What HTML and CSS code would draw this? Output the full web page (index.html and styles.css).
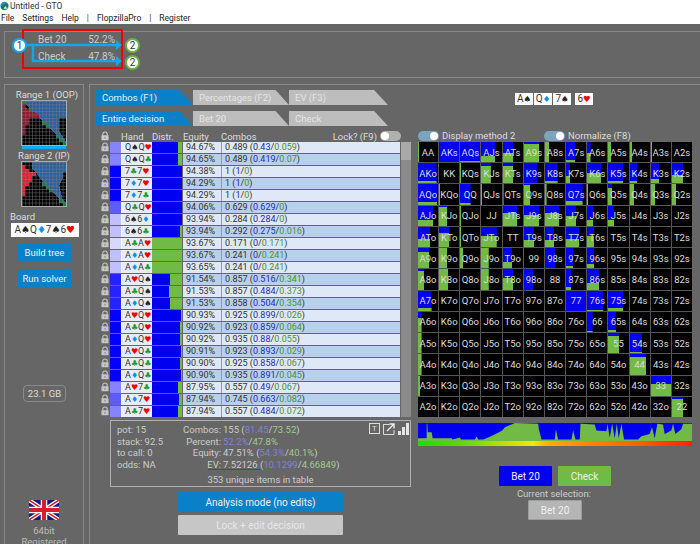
FILE: index.html
```html
<!DOCTYPE html>
<html lang="en">
<head>
<meta charset="utf-8">
<title>Untitled - GTO</title>
<link rel="stylesheet" href="styles.css">
</head>
<body>
<svg class="defs" width="0" height="0" aria-hidden="true">
  <symbol id="lock" viewBox="0 0 9 10"><path d="M2 4.5V3a2.5 2.5 0 0 1 5 0v1.5" fill="none" stroke="currentColor" stroke-width="1.3"/><rect x="0.5" y="4.2" width="8" height="5.6" rx="0.6" fill="currentColor"/><rect x="4" y="6" width="1" height="2" fill="#777"/></symbol>
</svg>
<header class="titlebar">
  <svg class="appicon" viewBox="0 0 10 10"><circle cx="5" cy="5" r="4.6" fill="#1f8fd0"/><path d="M1 6c2-3 3-1 4-3s3-1 4 1c0 3-2 5-4 5S1 8 1 6z" fill="#1f7a4a"/><path d="M4 8l2-3 2 3z" fill="#e8f0e8"/></svg>
  <span>Untitled - GTO</span>
</header>
<nav class="menu"><span>File</span><span>Settings</span><span>Help</span><span class="sep">|</span><span>FlopzillaPro</span><span class="sep">|</span><span>Register</span></nav>
<div class="app">
  <section class="tree">
    <div class="redbox"></div>
    <svg class="tree-lines" viewBox="0 0 150 47">
      <path d="M22 14H114M29 14V30H114" fill="none" stroke="#10a8ea" stroke-width="2.5"/>
      <path d="M112 9l6 5-6 5zM112 25l6 5-6 5z" fill="#10a8ea"/>
    </svg>
    <span class="node n1">1</span><span class="node n2a">2</span><span class="node n2b">2</span>
    <div class="act a1"><span>Bet 20</span><span>52.2%</span></div>
    <div class="act a2"><span>Check</span><span>47.8%</span></div>
  </section>
  <div class="work">
    <aside class="side">
      <div class="rlabel">Range 1 (OOP)</div>
      <svg class="mini" viewBox="0 0 13 13" shape-rendering="crispEdges">
        <defs><pattern id="g1" width="1" height="1" patternUnits="userSpaceOnUse"><path d="M0 0H1M0 0V1" fill="none" stroke="#808080" stroke-width="0.5"/></pattern></defs>
        <rect width="13" height="13" fill="#000"/>
        <path d="M1 0H13V5H11V9L13 12H12L1 1z" fill="#2a5f9e"/>
        <path d="M0 1H1V2L3 3L5 4V5H2V7H1V10H0z" fill="#8c1a2c"/>
        <path d="M0 0h1v1H0zM2 2h1v1H2zM6 6h1v1H6zM7 7h1v1H7zM10 10h1v1h-1zM11 11h1v1h-1zM12 12h1v1h-1z" fill="#1c7d3a"/>
        <rect width="13" height="13" fill="url(#g1)"/>
      </svg>
      <div class="rbar"></div>
      <div class="rlabel second">Range 2 (IP)</div>
      <svg class="mini" viewBox="0 0 13 13" shape-rendering="crispEdges">
        <defs><pattern id="g2" width="1" height="1" patternUnits="userSpaceOnUse"><path d="M0 0H1M0 0V1" fill="none" stroke="#808080" stroke-width="0.5"/></pattern></defs>
        <rect width="13" height="13" fill="#000"/>
        <path d="M3 0H13V3H12V5L11 7L12 11L13 12H12L7 7L4 3L3 2z" fill="#2a5f9e"/>
        <path d="M0 1H1V2H2V3H4V4H3V6H2V7H1V10H0z" fill="#e0202e"/>
        <path d="M6 6h1v1H6zM7 7h1v1H7zM8 8h1v1H8zM11 11h1v1h-1zM12 12h1v1h-1z" fill="#1c7d3a"/>
        <rect width="13" height="13" fill="url(#g2)"/>
      </svg>
      <div class="boardlabel">Board</div>
      <div class="boardbox">A<i class="sp">♠</i>Q<i class="di">♦</i>7<i class="sp">♠</i>6<i class="he">♥</i></div>
      <button class="btn sidebtn">Build tree</button>
      <button class="btn sidebtn">Run solver</button>
      <div class="mem">23.1 GB</div>
      <svg class="flag" viewBox="0 0 60 40">
        <rect width="60" height="40" fill="#1a1a7a"/>
        <path d="M0 0L60 40M60 0L0 40" stroke="#fff" stroke-width="8"/>
        <path d="M0 0L60 40M60 0L0 40" stroke="#d81e2c" stroke-width="3"/>
        <path d="M30 0V40M0 20H60" stroke="#fff" stroke-width="13"/>
        <path d="M30 0V40M0 20H60" stroke="#d81e2c" stroke-width="8"/>
      </svg>
      <div class="foot">64bit</div>
      <div class="foot">Registered</div>
    </aside>
    <main class="mainpanel">
      <div class="center">
        <div class="tabs"><span class="tab on">Combos (F1)</span><span class="tab">Percentages (F2)</span><span class="tab">EV (F3)</span></div>
        <div class="tabs"><span class="tab on">Entire decision</span><span class="tab">Bet 20</span><span class="tab">Check</span></div>
        <div class="thead">
          <svg class="lock"><use href="#lock"/></svg><span class="th-hand">Hand</span><span class="th-dist">Distr.</span><span class="th-eq">Equity</span><span class="th-cmb">Combos</span>
          <span class="th-lock">Lock? (F9)</span><span class="toggle grey"></span>
        </div>
        <div class="tablewrap">
          <div class="table">
            <div class="row"><svg class="lock"><use href="#lock"/></svg><span class="sw s4"></span><span class="hand">Q<i class="sp">♠</i>Q<i class="he">♥</i></span><span class="dist" style="--b:85%"></span><span class="eq">94.67%</span><span class="cmb">0.489 (<b>0.43</b>/<u>0.059</u>)</span></div>
            <div class="row"><svg class="lock"><use href="#lock"/></svg><span class="sw s4"></span><span class="hand">Q<i class="sp">♠</i>Q<i class="cl">♣</i></span><span class="dist" style="--b:85%"></span><span class="eq">94.65%</span><span class="cmb">0.489 (<b>0.419</b>/<u>0.07</u>)</span></div>
            <div class="row"><svg class="lock"><use href="#lock"/></svg><span class="sw s1"></span><span class="hand">7<i class="cl">♣</i>7<i class="he">♥</i></span><span class="dist" style="--b:100%"></span><span class="eq">94.38%</span><span class="cmb">1 (<b>1</b>/<u>0</u>)</span></div>
            <div class="row"><svg class="lock"><use href="#lock"/></svg><span class="sw s1"></span><span class="hand">7<i class="di">♦</i>7<i class="he">♥</i></span><span class="dist" style="--b:100%"></span><span class="eq">94.29%</span><span class="cmb">1 (<b>1</b>/<u>0</u>)</span></div>
            <div class="row"><svg class="lock"><use href="#lock"/></svg><span class="sw s1"></span><span class="hand">7<i class="di">♦</i>7<i class="cl">♣</i></span><span class="dist" style="--b:100%"></span><span class="eq">94.29%</span><span class="cmb">1 (<b>1</b>/<u>0</u>)</span></div>
            <div class="row"><svg class="lock"><use href="#lock"/></svg><span class="sw s3"></span><span class="hand">Q<i class="cl">♣</i>Q<i class="he">♥</i></span><span class="dist" style="--b:100%"></span><span class="eq">94.06%</span><span class="cmb">0.629 (<b>0.629</b>/<u>0</u>)</span></div>
            <div class="row"><svg class="lock"><use href="#lock"/></svg><span class="sw s5"></span><span class="hand">6<i class="sp">♠</i>6<i class="di">♦</i></span><span class="dist" style="--b:100%"></span><span class="eq">93.94%</span><span class="cmb">0.284 (<b>0.284</b>/<u>0</u>)</span></div>
            <div class="row"><svg class="lock"><use href="#lock"/></svg><span class="sw s5"></span><span class="hand">6<i class="sp">♠</i>6<i class="cl">♣</i></span><span class="dist" style="--b:94%"></span><span class="eq">93.94%</span><span class="cmb">0.292 (<b>0.275</b>/<u>0.016</u>)</span></div>
            <div class="row"><svg class="lock"><use href="#lock"/></svg><span class="sw s6"></span><span class="hand">A<i class="cl">♣</i>A<i class="he">♥</i></span><span class="dist" style="--b:0%"></span><span class="eq">93.67%</span><span class="cmb">0.171 (<b>0</b>/<u>0.171</u>)</span></div>
            <div class="row"><svg class="lock"><use href="#lock"/></svg><span class="sw s5"></span><span class="hand">A<i class="di">♦</i>A<i class="he">♥</i></span><span class="dist" style="--b:0%"></span><span class="eq">93.67%</span><span class="cmb">0.241 (<b>0</b>/<u>0.241</u>)</span></div>
            <div class="row"><svg class="lock"><use href="#lock"/></svg><span class="sw s5"></span><span class="hand">A<i class="di">♦</i>A<i class="cl">♣</i></span><span class="dist" style="--b:0%"></span><span class="eq">93.65%</span><span class="cmb">0.241 (<b>0</b>/<u>0.241</u>)</span></div>
            <div class="row"><svg class="lock"><use href="#lock"/></svg><span class="sw s2"></span><span class="hand">A<i class="he">♥</i>Q<i class="sp">♠</i></span><span class="dist" style="--b:60%"></span><span class="eq">91.54%</span><span class="cmb">0.857 (<b>0.516</b>/<u>0.341</u>)</span></div>
            <div class="row"><svg class="lock"><use href="#lock"/></svg><span class="sw s2"></span><span class="hand">A<i class="cl">♣</i>Q<i class="sp">♠</i></span><span class="dist" style="--b:55%"></span><span class="eq">91.53%</span><span class="cmb">0.857 (<b>0.484</b>/<u>0.373</u>)</span></div>
            <div class="row"><svg class="lock"><use href="#lock"/></svg><span class="sw s2"></span><span class="hand">A<i class="di">♦</i>Q<i class="sp">♠</i></span><span class="dist" style="--b:59%"></span><span class="eq">91.53%</span><span class="cmb">0.858 (<b>0.504</b>/<u>0.354</u>)</span></div>
            <div class="row"><svg class="lock"><use href="#lock"/></svg><span class="sw s1"></span><span class="hand">A<i class="he">♥</i>Q<i class="he">♥</i></span><span class="dist" style="--b:97%"></span><span class="eq">90.93%</span><span class="cmb">0.925 (<b>0.899</b>/<u>0.026</u>)</span></div>
            <div class="row"><svg class="lock"><use href="#lock"/></svg><span class="sw s1"></span><span class="hand">A<i class="cl">♣</i>Q<i class="he">♥</i></span><span class="dist" style="--b:93%"></span><span class="eq">90.92%</span><span class="cmb">0.923 (<b>0.859</b>/<u>0.064</u>)</span></div>
            <div class="row"><svg class="lock"><use href="#lock"/></svg><span class="sw s1"></span><span class="hand">A<i class="di">♦</i>Q<i class="he">♥</i></span><span class="dist" style="--b:94%"></span><span class="eq">90.92%</span><span class="cmb">0.935 (<b>0.88</b>/<u>0.055</u>)</span></div>
            <div class="row"><svg class="lock"><use href="#lock"/></svg><span class="sw s1"></span><span class="hand">A<i class="he">♥</i>Q<i class="cl">♣</i></span><span class="dist" style="--b:97%"></span><span class="eq">90.91%</span><span class="cmb">0.923 (<b>0.893</b>/<u>0.029</u>)</span></div>
            <div class="row"><svg class="lock"><use href="#lock"/></svg><span class="sw s1"></span><span class="hand">A<i class="cl">♣</i>Q<i class="cl">♣</i></span><span class="dist" style="--b:93%"></span><span class="eq">90.90%</span><span class="cmb">0.925 (<b>0.858</b>/<u>0.067</u>)</span></div>
            <div class="row"><svg class="lock"><use href="#lock"/></svg><span class="sw s1"></span><span class="hand">A<i class="di">♦</i>Q<i class="cl">♣</i></span><span class="dist" style="--b:95%"></span><span class="eq">90.90%</span><span class="cmb">0.935 (<b>0.891</b>/<u>0.045</u>)</span></div>
            <div class="row"><svg class="lock"><use href="#lock"/></svg><span class="sw s4"></span><span class="hand">A<i class="he">♥</i>7<i class="cl">♣</i></span><span class="dist" style="--b:88%"></span><span class="eq">87.95%</span><span class="cmb">0.557 (<b>0.49</b>/<u>0.067</u>)</span></div>
            <div class="row"><svg class="lock"><use href="#lock"/></svg><span class="sw s3"></span><span class="hand">A<i class="di">♦</i>7<i class="he">♥</i></span><span class="dist" style="--b:89%"></span><span class="eq">87.94%</span><span class="cmb">0.745 (<b>0.663</b>/<u>0.082</u>)</span></div>
            <div class="row"><svg class="lock"><use href="#lock"/></svg><span class="sw s4"></span><span class="hand">A<i class="cl">♣</i>7<i class="he">♥</i></span><span class="dist" style="--b:87%"></span><span class="eq">87.94%</span><span class="cmb">0.557 (<b>0.484</b>/<u>0.072</u>)</span></div>
          </div>
          <div class="scroll"><div class="thumb"></div></div>
        </div>
        <section class="stats">
          <div class="stat-icons">
            <span class="ic-t">T</span>
            <svg class="ic-e" viewBox="0 0 12 12"><path d="M.5 1.500h6M.5 1V11.500H11V7" fill="none" stroke="#ddd"/><path d="M4 8L10.500 1.500M6.500 1H11V5.500" fill="none" stroke="#eee" stroke-width="1.4"/></svg>
            <svg class="ic-s" viewBox="0 0 11 12"><path d="M0 8h3v4H0zM4 4h3v8H4zM8 0h3v12H8z" fill="#e4e4e4"/></svg>
          </div>
          <div class="stat-grid">
            <span>pot: 15</span><span class="lbl">Combos:</span><span>155 (<b>81.45</b>/<u>73.52</u>)</span>
            <span>stack: 92.5</span><span class="lbl">Percent:</span><span><b>52.2%</b>/<u>47.8%</u></span>
            <span>to call: 0</span><span class="lbl">Equity:</span><span>47.51% (<b>54.3%</b>/<u>40.1%</u>)</span>
            <span>odds: NA</span><span class="lbl">EV:</span><span>7.52126 (<b>10.1299</b>/<u>4.66849</u>)</span>
          </div>
          <div class="evline"></div>
          <div class="unique">353 unique items in table</div>
        </section>
        <div class="modes">
          <button class="btn mode">Analysis mode (no edits)</button>
          <button class="btn mode off">Lock + edit decision</button>
        </div>
      </div>
      <div class="right">
        <div class="cards"><span class="card">A<i class="sp">♠</i></span><span class="card">Q<i class="di">♦</i></span><span class="card">7<i class="sp">♠</i></span><span class="card gap">6<i class="he">♥</i></span></div>
        <div class="toggles">
          <div class="tg one"><span class="toggle"></span><span>Display method 2</span></div>
          <div class="tg"><span class="toggle"></span><span>Normalize (F8)</span></div>
        </div>
        <div class="heat">
          <div class="c" style="--w:7%;--b:0%">AA</div><div class="c" style="--w:100%;--b:100%">AKs</div><div class="c" style="--w:100%;--b:95%">AQs</div><div class="c" style="--w:67%;--b:70%">AJs</div><div class="c" style="--w:50%;--b:57%">ATs</div><div class="c" style="--w:75%;--b:12%">A9s</div><div class="c" style="--w:20%;--b:0%">A8s</div><div class="c" style="--w:45%;--b:88%">A7s</div><div class="c" style="--w:18%;--b:55%">A6s</div><div class="c" style="--w:15%;--b:0%">A5s</div><div class="c" style="--w:12%;--b:0%">A4s</div><div class="c" style="--w:7%;--b:0%">A3s</div><div class="c">A2s</div>
          <div class="c" style="--w:93%;--b:92%">AKo</div><div class="c">KK</div><div class="c" style="--w:6%;--b:0%">KQs</div><div class="c" style="--w:47%;--b:16%">KJs</div><div class="c" style="--w:50%;--b:15%">KTs</div><div class="c" style="--w:65%;--b:100%">K9s</div><div class="c" style="--w:63%;--b:90%">K8s</div><div class="c" style="--w:20%;--b:65%">K7s</div><div class="c" style="--w:70%;--b:50%">K6s</div><div class="c" style="--w:72%;--b:92%">K5s</div><div class="c" style="--w:36%;--b:90%">K4s</div><div class="c" style="--w:42%;--b:80%">K3s</div><div class="c" style="--w:57%;--b:60%">K2s</div>
          <div class="c" style="--w:97%;--b:85%">AQo</div><div class="c" style="--w:6%;--b:0%">KQo</div><div class="c" style="--w:53%;--b:90%">QQ</div><div class="c" style="--w:6%;--b:0%">QJs</div><div class="c" style="--w:3%;--b:0%">QTs</div><div class="c" style="--w:32%;--b:5%">Q9s</div><div class="c" style="--w:8%;--b:0%">Q8s</div><div class="c" style="--w:83%;--b:80%">Q7s</div><div class="c" style="--w:5%;--b:0%">Q6s</div><div class="c" style="--w:20%;--b:20%">Q5s</div><div class="c" style="--w:22%;--b:0%">Q4s</div><div class="c" style="--w:22%;--b:0%">Q3s</div><div class="c" style="--w:22%;--b:0%">Q2s</div>
          <div class="c" style="--w:77%;--b:72%">AJo</div><div class="c" style="--w:42%;--b:5%">KJo</div><div class="c" style="--w:6%;--b:0%">QJo</div><div class="c">JJ</div><div class="c" style="--w:72%;--b:35%">JTs</div><div class="c" style="--w:77%;--b:45%">J9s</div><div class="c" style="--w:70%;--b:35%">J8s</div><div class="c" style="--w:50%;--b:50%">J7s</div><div class="c" style="--w:30%;--b:70%">J6s</div><div class="c" style="--w:30%;--b:70%">J5s</div><div class="c">J4s</div><div class="c">J3s</div><div class="c">J2s</div>
          <div class="c" style="--w:60%;--b:60%">ATo</div><div class="c" style="--w:50%;--b:30%">KTo</div><div class="c" style="--w:5%;--b:0%">QTo</div><div class="c" style="--w:75%;--b:45%">JTo</div><div class="c">TT</div><div class="c" style="--w:52%;--b:65%">T9s</div><div class="c" style="--w:47%;--b:65%">T8s</div><div class="c" style="--w:65%;--b:60%">T7s</div><div class="c" style="--w:37%;--b:45%">T6s</div><div class="c">T5s</div><div class="c">T4s</div><div class="c">T3s</div><div class="c">T2s</div>
          <div class="c" style="--w:57%;--b:20%">A9o</div><div class="c" style="--w:42%;--b:0%">K9o</div><div class="c" style="--w:17%;--b:0%">Q9o</div><div class="c" style="--w:37%;--b:0%">J9o</div><div class="c" style="--w:45%;--b:70%">T9o</div><div class="c">99</div><div class="c" style="--w:50%;--b:100%">98s</div><div class="c" style="--w:35%;--b:90%">97s</div><div class="c" style="--w:37%;--b:80%">96s</div><div class="c">95s</div><div class="c">94s</div><div class="c">93s</div><div class="c">92s</div>
          <div class="c" style="--w:32%;--b:10%">A8o</div><div class="c" style="--w:47%;--b:0%">K8o</div><div class="c">Q8o</div><div class="c" style="--w:37%;--b:0%">J8o</div><div class="c" style="--w:50%;--b:45%">T8o</div><div class="c" style="--w:47%;--b:100%">98o</div><div class="c">88</div><div class="c" style="--w:25%;--b:85%">87s</div><div class="c" style="--w:62%;--b:65%">86s</div><div class="c">85s</div><div class="c">84s</div><div class="c">83s</div><div class="c">82s</div>
          <div class="c" style="--w:68%;--b:85%">A7o</div><div class="c">K7o</div><div class="c">Q7o</div><div class="c">J7o</div><div class="c">T7o</div><div class="c">97o</div><div class="c">87o</div><div class="c" style="--w:100%;--b:100%">77</div><div class="c" style="--w:82%;--b:97%">76s</div><div class="c" style="--w:73%;--b:85%">75s</div><div class="c">74s</div><div class="c">73s</div><div class="c">72s</div>
          <div class="c" style="--w:18%;--b:30%">A6o</div><div class="c">K6o</div><div class="c">Q6o</div><div class="c">J6o</div><div class="c">T6o</div><div class="c">96o</div><div class="c">86o</div><div class="c">76o</div><div class="c" style="--w:28%;--b:95%">66</div><div class="c" style="--w:38%;--b:90%">65s</div><div class="c">64s</div><div class="c">63s</div><div class="c">62s</div>
          <div class="c" style="--w:18%;--b:0%">A5o</div><div class="c">K5o</div><div class="c">Q5o</div><div class="c">J5o</div><div class="c">T5o</div><div class="c">95o</div><div class="c">85o</div><div class="c">75o</div><div class="c">65o</div><div class="c" style="--w:53%;--b:15%">55</div><div class="c" style="--w:60%;--b:95%">54s</div><div class="c">53s</div><div class="c">52s</div>
          <div class="c" style="--w:18%;--b:0%">A4o</div><div class="c">K4o</div><div class="c">Q4o</div><div class="c">J4o</div><div class="c">T4o</div><div class="c">94o</div><div class="c">84o</div><div class="c">74o</div><div class="c">64o</div><div class="c">54o</div><div class="c" style="--w:82%;--b:12%">44</div><div class="c">43s</div><div class="c">42s</div>
          <div class="c" style="--w:10%;--b:0%">A3o</div><div class="c">K3o</div><div class="c">Q3o</div><div class="c">J3o</div><div class="c">T3o</div><div class="c">93o</div><div class="c">83o</div><div class="c">73o</div><div class="c">63o</div><div class="c">53o</div><div class="c">43o</div><div class="c" style="--w:100%;--b:40%">33</div><div class="c">32s</div>
          <div class="c">A2o</div><div class="c">K2o</div><div class="c">Q2o</div><div class="c">J2o</div><div class="c">T2o</div><div class="c">92o</div><div class="c">82o</div><div class="c">72o</div><div class="c">62o</div><div class="c">52o</div><div class="c">42o</div><div class="c">32o</div><div class="c" style="--w:55%;--b:8%">22</div>
        </div>
        <svg class="chart" viewBox="9 278 823 52" preserveAspectRatio="none">
          <rect x="9" y="278" width="823" height="52" fill="#0000f0"/>
          <path fill="#70ba45" d="M9 330V322H35V280H37L38 305H50L53 322H110L113 326L135 320L138 326H180L185 316L190 326H205L225 318L245 308L262 300L270 290L290 282L300 278L370 280L372 296L380 326H420L423 296L430 326H470L475 300L482 326H495L497 280L540 282L545 300L575 302L578 280L585 320L592 280L600 322L606 280L612 322L620 280L628 326H640L670 326L680 316L705 310L712 290L720 322L728 280L745 282L750 310L770 300L775 280L782 310L800 296L805 280H832V330z"/>
        </svg>
        <div class="ramp"></div>
        <div class="actions"><button class="btn act-b">Bet 20</button><button class="btn act-c">Check</button></div>
        <div class="cursel">Current selection:</div>
        <button class="btn selbtn">Bet 20</button>
      </div>
    </main>
  </div>
</div>
</body>
</html>
```
FILE: styles.css
```css
* { box-sizing: border-box; }
html, body { margin: 0; height: 544px; overflow: hidden; }
body { font-family: Roboto, "Open Sans", sans-serif; font-size: 9.5px; color: #ddd; background: #666; }
.defs { position: absolute; }
i { font-style: normal; font-family: "DejaVu Sans", sans-serif; }
.sp { color: #222; } .cl { color: #1f9a2f; } .di { color: #0a92e6; } .he { color: #f00000; }

.titlebar { height: 12px; background: #fff; color: #333; display: flex; align-items: center; gap: 1px; font-size: 8.5px; line-height: 12px; }
.appicon { width: 9px; height: 10px; }
.menu { height: 12px; background: #fff; color: #222; display: flex; font-size: 8.5px; line-height: 12px; padding-left: 1px; gap: 8px; }
.menu .sep { color: #444; }

.app { padding: 7px 0 0 4px; height: 520px; }
.tree { position: relative; height: 47px; margin-right: -2px; border: 1px solid #888; }
.tree-lines { position: absolute; left: -1px; top: -1px; width: 150px; height: 47px; }
.redbox { position: absolute; left: 17px; top: -3px; width: 101px; height: 40px; border: 2px solid #f00000; }
.node { position: absolute; width: 15px; height: 15px; border-radius: 50%; background: #fff; color: #333; text-align: center; line-height: 11px; font-size: 10px; border: 2px solid; }
.n1 { left: 7px; top: 6px; border-color: #10a8ea; }
.n2a { left: 120px; top: 6px; border-color: #6cb33f; }
.n2b { left: 120px; top: 23px; border-color: #6cb33f; }
.act { position: absolute; left: 33px; width: 77px; display: flex; justify-content: space-between; font-size: 10px; line-height: 12px; color: #ccc; }
.a1 { top: 2px; } .a2 { top: 19px; }

.work { display: flex; gap: 5px; margin-top: 6px; height: 470px; }
.side { width: 80px; border: 1px solid #888; border-width: 1px 1px 0; display: flex; flex-direction: column; align-items: center; padding-top: 4px; }
.rlabel { font-size: 9.5px; line-height: 12px; margin-left: 6px; white-space: nowrap; color: #ddd; }
.rlabel.second { margin: 1px 0 0; }
.mini { width: 44px; height: 44px; display: block; outline: 1px solid #aaa; }
.rbar { width: 44px; height: 3px; background: #08b0f4; margin-top: 1px; }
.boardlabel { align-self: flex-start; margin: 5px 0 0 5px; font-size: 9.5px; line-height: 12px; }
.boardbox { width: 68px; height: 14px; background: #fff; color: #333; font-size: 10px; line-height: 14px; padding-left: 4px; margin-left: 1px; white-space: nowrap; }
.btn { border: 0; border-radius: 1px; font-family: inherit; color: #f0f0f0; padding: 0; display: block; }
.sidebtn { width: 53px; height: 19px; background: #0a80c8; font-size: 9.5px; margin-top: 6px; margin-left: 1px; }
.sidebtn + .sidebtn { margin-top: 7px; }
.mem { margin-top: 97px; width: 43px; height: 17px; border: 1px solid #8a8a8a; border-radius: 4px; text-align: center; line-height: 15px; font-size: 9.5px; color: #ddd; margin-left: 1px; flex: none; }
.flag { width: 30px; height: 20px; margin-top: 98px; display: block; flex: none; }
.foot { font-size: 9.5px; line-height: 11px; margin-top: 5px; color: #bbb; flex: none; }
.foot + .foot { margin-top: 0; }

.mainpanel { flex: 1; border: 1px solid #888; border-width: 1px 0 0 1px; display: flex; padding: 5px 0 0 6px; margin-right: -2px; }
.center { width: 316px; flex: none; }
.tabs { display: grid; grid-template-columns: 97px 96px 99px; height: 15px; margin-bottom: 6px; width: 292px; }
.tab { background: #bdbdbd; color: #e4e4e4; font-size: 9.5px; line-height: 15px; padding-left: 6px; clip-path: polygon(0 0, 86% 0, 100% 100%, 0 100%); }
.tab.on { background: #0a80c8; color: #e8f0f5; }
.thead { height: 11px; width: 305px; margin: -1px 0 0; padding-left: 5px; font-size: 9.5px; line-height: 11px; display: flex; color: #ddd; }
.thead .lock { width: 8px; height: 10px; flex: none; color: #ccc; margin-right: 12px; }
.th-hand { width: 31px; } .th-dist { width: 31px; } .th-eq { width: 38px; }
.th-lock { margin-left: auto; margin-right: 3px; white-space: nowrap; }
.toggle { display: block; width: 21px; height: 10px; border-radius: 5px; background: #7ba4bd; position: relative; flex: none; }
.toggle::after { content: ""; position: absolute; right: 1px; top: 1px; width: 8px; height: 8px; border-radius: 50%; background: #fff; }
.toggle.grey { background: #b0b0b0; }
.toggle.grey::after { right: auto; left: 1px; }

.tablewrap { display: flex; padding-left: 5px; gap: 1px; height: 275px; }
.table { width: 299px; display: grid; grid-auto-rows: 12px; }
.row { display: grid; grid-template-columns: 9px 11px 31px 31px 39px 178px; height: 12px; padding-bottom: 1px; color: #333; font-size: 9px; line-height: 11px; }
.row > span { display: block; overflow: hidden; white-space: nowrap; }
.row .lock { width: 8px; height: 10px; color: #c6c6c6; }
.s1 { background: #0000ff; } .s2 { background: #2424ff; } .s3 { background: #5c5cff; }
.s4 { background: #8484ff; } .s5 { background: #c0c0ff; } .s6 { background: #d8d8ff; }
.hand { background: #e6edf8; border-left: 1px solid #fff; padding-left: 3px; }
.hand i { font-size: 8px; }
.dist { background: linear-gradient(to right, #0000f0 var(--b), #70ba45 var(--b)); margin-right: 1px; }
.eq, .cmb { background: #dee8f6; }
.eq { border-right: 1px solid #8f9bac; padding-left: 3px; }
.cmb { padding-left: 3px; }
.row:nth-child(even) .eq, .row:nth-child(even) .cmb { background: #b6d0ee; }
.cmb b { font-weight: 400; color: #2a2ab4; }
.cmb u { text-decoration: none; color: #4f8f30; }
.scroll { width: 10px; background: #8a8a8a; }
.thumb { height: 18px; background: #a9a9a9; }

.stats { position: relative; margin: 3px 0 0 14px; width: 301px; height: 67px; border: 1px solid #b0b0b0; padding: 3px 6px 0; color: #ccc; font-size: 9.5px; line-height: 11.6px; }
.stat-grid { display: grid; grid-template-columns: 43px 63px 1fr; }
.lbl { text-align: right; padding-right: 2px; }
.stat-grid span { white-space: nowrap; }
.stat-grid b { font-weight: 400; color: #8080dc; }
.stat-grid u { text-decoration: none; color: #a0cc8a; }
.evline { position: absolute; left: 97px; top: 48px; width: 52px; height: 1px; background: #f00000; }
.unique { text-align: center; margin-top: 4px; }
.stat-icons { position: absolute; right: 1px; top: 2px; display: flex; gap: 3px; align-items: flex-start; }
.ic-t { width: 11px; height: 11px; border: 1px solid #ddd; font-size: 8px; line-height: 9px; text-align: center; color: #ddd; }
.ic-e { width: 12px; height: 12px; }
.ic-s { width: 11px; height: 12px; }
.modes { margin: 5px 0 0 82px; }
.mode { width: 165px; height: 20px; background: #0a80c8; font-size: 10px; }
.mode.off { background: #c6c6c6; color: #e6e6e6; margin-top: 3px; }

.right { width: 274px; margin-left: 6px; flex: none; }
.cards { display: flex; gap: 1px; height: 12px; margin: 3px 0 0 97px; }
.card { width: 18px; height: 12px; background: #fff; color: #333; font-size: 10px; line-height: 12px; text-align: center; white-space: nowrap; }
.card i { font-size: 8.5px; }
.card.gap { margin-left: 3px; }
.toggles { display: flex; height: 11px; margin-top: 26px; font-size: 9.5px; line-height: 10px; color: #ddd; }
.tg { display: flex; gap: 3px; }
.tg.one { width: 126px; }
.heat { display: grid; grid-template-columns: repeat(13, 1fr); grid-auto-rows: 1fr; width: 274px; height: 275px; background: #555; gap: 1px; }
.c { --w: 0%; --b: 0%; color: #ddd; font-size: 9.5px; display: flex; align-items: center; justify-content: center; overflow: hidden; background: linear-gradient(to bottom, #0000f0 var(--b), #70ba45 var(--b)) no-repeat left top / var(--w) 100%, #000; }
.chart { display: block; width: 274px; height: 18px; margin-top: 6px; }
.ramp { height: 5px; background: linear-gradient(to right, #18e000 0%, #5ad800 15%, #b4e000 30%, #f2e800 42%, #ffb000 47%, #ff8a00 60%, #ff6000 80%, #ff2000 100%); }
.actions { display: flex; gap: 6px; margin: 20px 0 0 81px; }
.act-b { width: 53px; height: 20px; background: #0000f0; font-size: 10px; }
.act-c { width: 53px; height: 20px; background: #70ba45; font-size: 10px; }
.cursel { text-align: center; font-size: 9.5px; line-height: 12px; margin: 2px 0 0 -2px; color: #ccc; }
.selbtn { width: 54px; height: 20px; background: #b5b5b5; border: 1px solid #9c9c9c; font-size: 10px; margin: 0 0 0 110px; }
```
